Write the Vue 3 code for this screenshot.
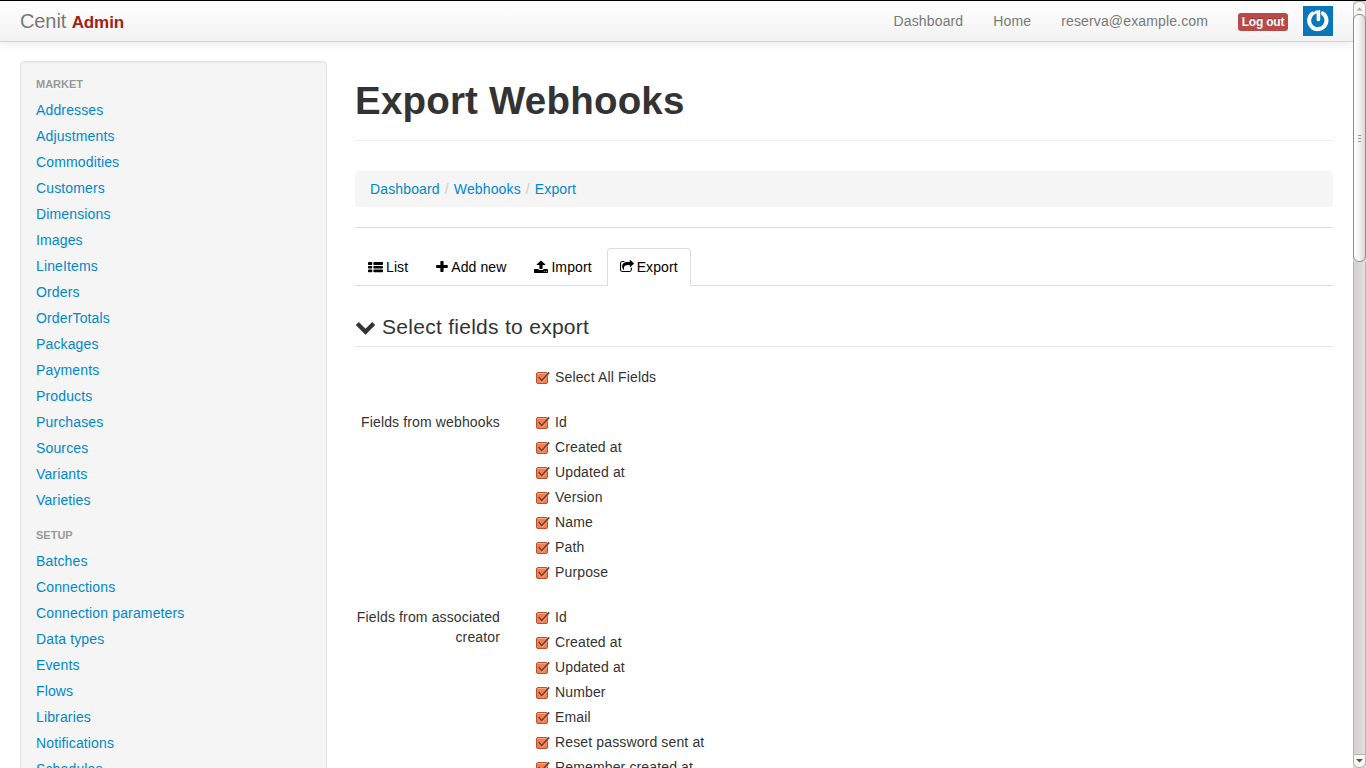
<script setup>
const sections = [
  {
    title: 'Market',
    items: ['Addresses', 'Adjustments', 'Commodities', 'Customers', 'Dimensions', 'Images', 'LineItems', 'Orders', 'OrderTotals', 'Packages', 'Payments', 'Products', 'Purchases', 'Sources', 'Variants', 'Varieties'],
  },
  {
    title: 'Setup',
    items: ['Batches', 'Connections', 'Connection parameters', 'Data types', 'Events', 'Flows', 'Libraries', 'Notifications', 'Schedules'],
  },
]

const groups = [
  { label: '', fields: ['Select All Fields'] },
  { label: 'Fields from webhooks', fields: ['Id', 'Created at', 'Updated at', 'Version', 'Name', 'Path', 'Purpose'] },
  { label: 'Fields from associated creator', fields: ['Id', 'Created at', 'Updated at', 'Number', 'Email', 'Reset password sent at', 'Remember created at'] },
]

const tabs = [
  { label: 'List', w: 15, box: '0 0 1792 1792', d: 'M96 256h320q96 0 96 96v192q0 96-96 96h-320q-96 0-96-96v-192q0-96 96-96zM96 768h320q96 0 96 96v128q0 96-96 96h-320q-96 0-96-96v-128q0-96 96-96zM96 1216h320q96 0 96 96v160q0 96-96 96h-320q-96 0-96-96v-160q0-96 96-96zM736 256h960q96 0 96 96v192q0 96-96 96h-960q-96 0-96-96v-192q0-96 96-96zM736 768h960q96 0 96 96v128q0 96-96 96h-960q-96 0-96-96v-128q0-96 96-96zM736 1216h960q96 0 96 96v160q0 96-96 96h-960q-96 0-96-96v-160q0-96 96-96z' },
  { label: 'Add new', w: 12, box: '180 0 1440 1792', d: 'M1600 736v192q0 40-28 68t-68 28h-416v416q0 40-28 68t-68 28h-192q-40 0-68-28t-28-68v-416h-416q-40 0-68-28t-28-68v-192q0-40 28-68t68-28h416v-416q0-40 28-68t68-28h192q40 0 68 28t28 68v416h416q40 0 68 28t28 68z' },
  { label: 'Import', w: 14, box: '64 0 1664 1792', d: 'M1344 1472q0-26-19-45t-45-19-45 19-19 45 19 45 45 19 45-19 19-45zm256 0q0-26-19-45t-45-19-45 19-19 45 19 45 45 19 45-19 19-45zm128-224v320q0 40-28 68t-68 28h-1472q-40 0-68-28t-28-68v-320q0-40 28-68t68-28h427q21 56 70.5 92t110.5 36h256q61 0 110.5-36t70.5-92h427q40 0 68 28t28 68zm-325-648q-17 40-59 40h-256v448q0 26-19 45t-45 19h-256q-26 0-45-19t-19-45v-448h-256q-42 0-59-40-17-39 14-69l448-448q18-19 45-19t45 19l448 448q31 30 14 69z' },
  { label: 'Export', w: 14, active: true, box: '64 0 1664 1792', d: 'M1472 989v259q0 119-84.5 203.5t-203.5 84.5h-832q-119 0-203.5-84.5t-84.5-203.5v-832q0-119 84.5-203.5t203.5-84.5h255q13 0 22.5 9.5t9.5 22.5q0 27-26 32-77 26-133 60-10 4-16 4h-112q-66 0-113 47t-47 113v832q0 66 47 113t113 47h832q66 0 113-47t47-113v-214q0-19 18-29 28-13 54-37 16-16 35-8 21 9 21 31zm237-496l-384 384q-18 19-45 19-12 0-25-5-39-17-39-59v-192h-160q-323 0-438 131-119 137-74 473 3 23-20 34-8 2-12 2-16 0-26-13-10-14-21-31t-39.5-68.5-49.5-99.5-38.5-114-17.5-122q0-49 3.5-91t14-90 28-88 47-81.5 68.5-74 94.5-61.5 124.5-48.5 159.5-30.5 196.5-11h160v-192q0-42 39-59 13-5 25-5 26 0 45 19l384 384q19 19 19 45t-19 45z' },
]
</script>

<template>
  <div class="window">
    <div class="view">
      <header class="navbar">
        <a class="brand">Cenit <small>Admin</small></a>
        <nav class="links">
          <a>Dashboard</a>
          <a>Home</a>
          <a>reserva@example.com</a>
          <a><span class="logout">Log out</span></a>
        </nav>
        <svg class="avatar" viewBox="0 0 30 30">
          <rect width="30" height="30" fill="#0b77bb" />
          <path d="M9.300 7.700A8.700 8.700 0 1 0 19.800 7.300" fill="none" stroke="#fff" stroke-width="4" stroke-linecap="round" />
          <path d="M12 4.700L17.200 4V13.800Q17.200 15.200 15.900 15.200H14.900Q13.600 15.200 13.600 13.800V7.500L9.500 9Z" fill="#fff" />
        </svg>
      </header>

      <div class="columns">
        <aside class="sidebar">
          <section v-for="s in sections" :key="s.title">
            <h6>{{ s.title }}</h6>
            <a v-for="i in s.items" :key="i">{{ i }}</a>
          </section>
        </aside>

        <main class="main">
          <h1>Export Webhooks</h1>
          <div class="breadcrumb"><a>Dashboard</a><i>/</i><a>Webhooks</a><i>/</i><a>Export</a></div>
          <hr />
          <div class="tabs">
            <a v-for="t in tabs" :key="t.label" :class="{ active: t.active }">
              <svg :width="t.w" height="14" :viewBox="t.box" preserveAspectRatio="none"><path :d="t.d" /></svg>
              <span>{{ t.label }}</span>
            </a>
          </div>
          <h2>
            <svg width="21" height="21" viewBox="0 0 1792 1792"><path d="M1683 808l-742 741q-19 19-45 19t-45-19l-742-741q-19-19-19-45.500t19-45.500l166-165q19-19 45-19t45 19l531 531 531-531q19-19 45-19t45 19l166 165q19 19 19 45.500t-19 45.500z" /></svg>
            <span>Select fields to export</span>
          </h2>
          <div v-for="(g, n) in groups" :key="n" class="group">
            <div class="label">{{ g.label }}</div>
            <div class="fields">
              <label v-for="f in g.fields" :key="f">
                <svg class="check" width="15" height="14" viewBox="0 0 15 14">
                  <rect x=".5" y="1.500" width="11" height="11" rx="1.500" fill="#f47e50" stroke="#b9532d" />
                  <path d="M1.500 2.500h9" stroke="#fba582" />
                  <path d="M3 6.700L6 9.800L11.500 3.500" fill="none" stroke="#ffb596" stroke-width="3" opacity=".7" />
                  <path d="M2.700 6.200L5.700 9.500L13.200 1.300" fill="none" stroke="#754130" stroke-width="1.800" />
                </svg>
                <span>{{ f }}</span>
              </label>
            </div>
          </div>
        </main>
      </div>
    </div>

    <div class="scrollbar">
      <div class="step"><svg width="13" height="14" viewBox="0 0 13 14"><path d="M3.500 8.500L6.500 5.500L9.500 8.500z" fill="#aaa9a7" /></svg></div>
      <div class="thumb"><b /><b /><b /></div>
      <div class="track" />
      <div class="step last"><svg width="13" height="14" viewBox="0 0 13 14"><path d="M3 5L6.500 8.500L10 5z" fill="#555" /></svg></div>
    </div>
  </div>
</template>

<style>
html, body { margin: 0; height: 768px; overflow: hidden; background: #fff; }
</style>

<style scoped>
.window {
  box-sizing: border-box;
  display: flex;
  width: 1366px;
  height: 768px;
  overflow: hidden;
  border-top: 1px solid #000;
  background: #fff;
  color: #333;
  font: 14px/20px "Liberation Sans", Arial, sans-serif;
  letter-spacing: .14px;
}
.view { width: 1353px; height: 767px; overflow: hidden; }
.navbar {
  position: relative;
  box-sizing: border-box;
  display: flex;
  height: 41px;
  padding: 0 20px;
  border-bottom: 1px solid #d4d4d4;
  background: linear-gradient(#fff, #f2f2f2);
  box-shadow: 0 1px 10px rgba(0, 0, 0, .1);
  color: #777;
  text-shadow: 0 1px 0 #fff;
}
.brand { padding-top: 10px; font-size: 20px; letter-spacing: -.1px; white-space: nowrap; }
.brand small { color: #a2200f; font-size: 17px; font-weight: bold; }
.links { display: flex; margin-left: auto; }
.links a { padding: 10px 15px; }
.logout {
  display: block;
  box-sizing: border-box;
  width: 50px;
  height: 18px;
  margin-top: 2px;
  border-radius: 3px;
  background: #b94a48;
  color: #fff;
  font-size: 12px;
  font-weight: bold;
  letter-spacing: -.2px;
  line-height: 18px;
  text-align: center;
  text-shadow: 0 -1px 0 rgba(0, 0, 0, .25);
  white-space: nowrap;
}
.avatar { width: 30px; height: 30px; margin-top: 5px; }
.columns { display: flex; gap: 28px; padding: 19px 20px 0; }
.sidebar {
  box-sizing: border-box;
  width: 307px;
  height: 900px;
  padding: 9px 15px;
  border: 1px solid #e3e3e3;
  border-radius: 4px;
  background: #f5f5f5;
  box-shadow: inset 0 1px 1px rgba(0, 0, 0, .05);
}
.sidebar section { margin-bottom: 9px; }
.sidebar h6 {
  height: 20px;
  margin: 0;
  padding: 3px 0;
  color: #999;
  font-size: 11px;
  letter-spacing: 0;
  text-transform: uppercase;
  text-shadow: 0 1px 0 rgba(255, 255, 255, .5);
}
.sidebar a { display: block; height: 20px; padding: 3px 0; color: #08c; }
.main { width: 978px; }
h1 {
  margin: 20px 0 30px;
  padding-bottom: 19px;
  border-bottom: 1px solid #eee;
  font-size: 38.5px;
  letter-spacing: .2px;
  line-height: 40px;
}
.breadcrumb { display: flex; height: 20px; padding: 8px 15px; border-radius: 4px; background: #f5f5f5; color: #08c; }
.breadcrumb i { padding: 0 5px; color: #ccc; font-style: normal; }
hr { height: 1px; margin: 20px 0; border: 0; background: #ddd; }
.tabs { display: flex; gap: 2px; height: 37px; margin-bottom: 20px; border-bottom: 1px solid #ddd; color: #000; }
.tabs a { display: flex; gap: 3px; height: 20px; padding: 8px 12px; border: 1px solid transparent; border-bottom: 0; border-radius: 4px 4px 0 0; letter-spacing: .1px; }
.tabs a.active { height: 21px; border-color: #ddd; background: #fff; }
.tabs svg { margin-top: 3px; }
h2 {
  display: flex;
  gap: 6px;
  height: 40px;
  margin: 0 0 20px;
  border-bottom: 1px solid #e5e5e5;
  font-size: 21px;
  font-weight: normal;
  letter-spacing: .28px;
  line-height: 42px;
}
h2 svg { margin-top: 10px; fill: #333; }
.group { display: flex; gap: 36px; margin-bottom: 20px; }
.label { width: 145px; text-align: right; }
.fields label { display: flex; gap: 4px; height: 20px; margin-bottom: 5px; }
.check { margin-top: 4px; }
.scrollbar {
  display: flex;
  flex-direction: column;
  box-sizing: border-box;
  width: 13px;
  height: 767px;
  background: #d9d8d6;
}
.step { box-sizing: border-box; height: 20px; margin-bottom: -7px; border: 1px solid #b5b3b0; border-radius: 6px 6px 0 0; background: #f6f6f5; }
.step svg { display: block; margin-left: -1px; }
.step.last { height: 14px; margin: 0; border-radius: 0 0 6px 6px; }
.step.last svg { margin-top: -1px; }
.thumb {
  position: relative;
  display: flex;
  flex-direction: column;
  justify-content: center;
  align-items: center;
  gap: 2px;
  box-sizing: border-box;
  height: 248px;
  border: 1px solid #8e8d8a;
  border-radius: 6px;
  background: linear-gradient(90deg, #fff, #f4f4f3 45%, #d9d8d6);
}
.thumb b { width: 3px; height: 1px; background: #999; }
.track { flex: 1; border: solid #b5b3b0; border-width: 0 1px; background: linear-gradient(90deg, #d2d1cf, #e0dfdd); }
</style>
